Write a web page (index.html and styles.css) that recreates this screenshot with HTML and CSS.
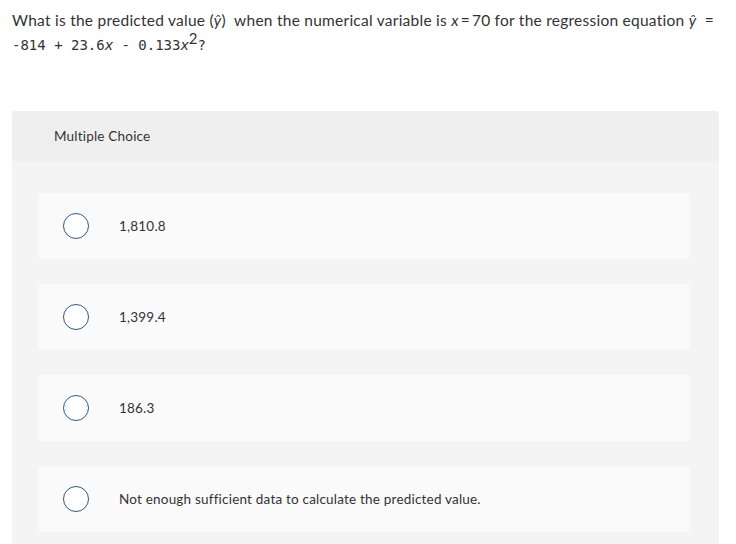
FILE: index.html
```html
<!DOCTYPE html>
<html>
<head>
<meta charset="utf-8">
<link rel="stylesheet" href="styles.css">
</head>
<body>
<div class="question">
  <p class="line1">What is the predicted value (<i class="m">ŷ</i>) &nbsp;when the numerical variable is <i class="m">x</i><span class="eq">=</span>70 for the regression equation <i class="m">ŷ</i> &nbsp;=</p>
  <p class="line2">-814 + 23.6<i>x</i> - 0.133<i>x</i><sup>2</sup>?</p>
</div>
<div class="panel">
  <div class="panel-head">Multiple Choice</div>
  <div class="panel-body">
    <div class="card"><span class="radio"></span><span class="label">1,810.8</span></div>
    <div class="card"><span class="radio"></span><span class="label">1,399.4</span></div>
    <div class="card"><span class="radio"></span><span class="label">186.3</span></div>
    <div class="card"><span class="radio"></span><span class="label">Not enough sufficient data to calculate the predicted value.</span></div>
  </div>
</div>
</body>
</html>
```
FILE: styles.css
```css
html, body {
  margin: 0;
  padding: 0;
  background: #ffffff;
}
body {
  font-family: "Lato", "Open Sans", sans-serif;
  color: #333333;
  width: 736px;
  height: 544px;
  overflow: hidden;
}
.question {
  padding: 9px 0 0 12px;
}
.line1 {
  margin: 0;
  font-size: 15.5px;
  letter-spacing: 0.25px;
  line-height: 22px;
  white-space: nowrap;
}
.line1 .m {
  font-style: italic;
}
.line1 .eq {
  margin: 0 2px;
}
.line2 {
  margin: 3px 0 0 0;
  font-family: "DejaVu Sans Mono", monospace;
  font-size: 14px;
  line-height: 22px;
  white-space: nowrap;
}
.line2 i {
  font-family: "DejaVu Sans", sans-serif;
  font-style: italic;
}
.line2 sup {
  font-family: "Lato", sans-serif;
  font-size: 15px;
  line-height: 0;
}
.panel {
  margin: 55px 0 0 12px;
  width: 707px;
  border-radius: 3px 3px 0 0;
  overflow: hidden;
}
.panel-head {
  height: 50px;
  background: #efefef;
  display: flex;
  align-items: center;
  padding-left: 42px;
  font-size: 13.5px;
  letter-spacing: 0.2px;
  color: #333333;
}
.panel-body {
  background: #f4f4f4;
  padding: 32px 29px 20px 26px;
  display: flex;
  flex-direction: column;
  gap: 25px;
}
.card {
  height: 66px;
  background: #fafafa;
  border-radius: 4px;
  display: flex;
  align-items: center;
  padding-left: 25px;
}
.radio {
  width: 24px;
  height: 24px;
  border: 1.5px solid #2d5a8a;
  border-radius: 50%;
  background: #ffffff;
  flex: none;
}
.label {
  margin-left: 30px;
  font-size: 13.5px;
  letter-spacing: 0.2px;
  color: #333333;
}
```
